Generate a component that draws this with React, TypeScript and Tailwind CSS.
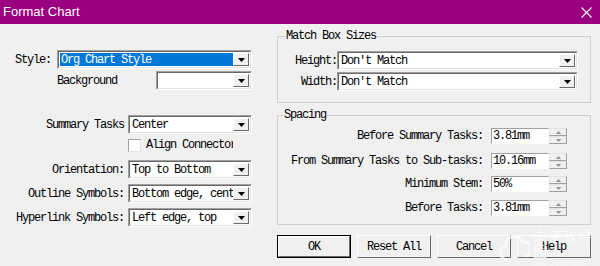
import React from "react"

function DropBtn() {
    return (
        <div className="w-[16px] h-full shrink-0 flex items-center justify-center bg-[#f0f0f0] border border-white border-b-[#696969] border-r-[#696969]">
            <svg width="7" height="4" viewBox="0 0 7 4">
                <path d="M0 0h7L3.5 4z" fill="#000" />
            </svg>
        </div>
    )
}

function Combo({ value, w, selected }: { value: string; w: string; selected?: boolean }) {
    return (
        <div className={`${w} h-[19px] flex border border-[#a0a0a0] border-b-white border-r-white`}>
            <div className="flex-1 min-w-0 flex border border-[#696969] border-b-[#e3e3e3] border-r-[#e3e3e3] bg-white p-[1px]">
                <div className={`flex-1 min-w-0 flex items-center px-[1px] overflow-hidden whitespace-nowrap ${selected ? "bg-[#0078d7] text-white" : ""}`}>
                    {value}
                </div>
                <DropBtn />
            </div>
        </div>
    )
}

function Spin({ value }: { value: string }) {
    return (
        <div className="flex h-[16px] ml-[8px]">
            <div className="w-[58px] flex items-center bg-white border border-[#a0a0a0] border-b-white border-r-white pl-[1px] whitespace-nowrap">
                {value}
            </div>
            <div className="w-[18px] flex flex-col">
                <div className="flex-1 flex items-center justify-center bg-[#f0f0f0] border border-[#e3e3e3] border-b-[#a0a0a0] border-r-[#a0a0a0]">
                    <svg width="5" height="3" viewBox="0 0 5 3"><path d="M0 3h5L2.5 0z" fill="#909090" /></svg>
                </div>
                <div className="flex-1 flex items-center justify-center bg-[#f0f0f0] border border-[#e3e3e3] border-b-[#a0a0a0] border-r-[#a0a0a0]">
                    <svg width="5" height="3" viewBox="0 0 5 3"><path d="M0 0h5L2.5 3z" fill="#909090" /></svg>
                </div>
            </div>
        </div>
    )
}

function Btn({ label, def }: { label: string; def?: boolean }) {
    return (
        <div className={`w-[74px] h-[23px] flex ${def ? "border border-[#000]" : ""}`}>
            <div className="flex-1 flex items-center justify-center bg-[#f0f0f0] border border-white border-b-[#696969] border-r-[#696969]">
                {label}
            </div>
        </div>
    )
}

export default function App() {
    const rows = [
        { label: "Orientation:", value: "Top to Bottom" },
        { label: "Outline Symbols:", value: "Bottom edge, center" },
        { label: "Hyperlink Symbols:", value: "Left edge, top" },
    ]
    const spins = [
        { label: "Before Summary Tasks:", value: "3.81mm", mt: "mt-[7px]" },
        { label: "From Summary Tasks to Sub-tasks:", value: "10.16mm", mt: "mt-[9px]" },
        { label: "Minimum Stem:", value: "50%", mt: "mt-[7px]" },
        { label: "Before Tasks:", value: "3.81mm", mt: "mt-[8px]" },
    ]

    return (
        <div className="w-[600px] h-[266px] bg-[#f0f0f0] flex flex-col relative overflow-hidden font-['Liberation_Mono',monospace] text-[12px] tracking-[-1.2px] text-black">
            <div className="h-[24px] shrink-0 bg-[#9b0080] flex items-center justify-between pl-[3px] pr-[8px] font-['Liberation_Sans',sans-serif] text-[13px] tracking-normal text-white">
                <span>Format Chart</span>
                <svg width="11" height="11" viewBox="0 0 11 11">
                    <path d="M0.5 0.5l10 10M10.5 0.5l-10 10" stroke="#fff" strokeWidth="1.1" />
                </svg>
            </div>

            <div className="flex flex-1">
                {/* left column */}
                <div className="w-[277px] shrink-0 pt-[26px]">
                    <div className="flex items-center">
                        <span className="w-[57px] pl-[15px]">Style:</span>
                        <Combo value="Org Chart Style" w="w-[195px]" selected />
                    </div>
                    <div className="flex items-center mt-[2px]">
                        <span className="w-[156px] pl-[57px]">Background</span>
                        <Combo value="" w="w-[96px]" />
                    </div>

                    <div className="flex items-center mt-[25px]">
                        <span className="w-[128px] text-right pr-[4px]">Summary Tasks</span>
                        <Combo value="Center" w="w-[124px]" />
                    </div>
                    <div className="flex items-center h-[16px] mt-[3px] pl-[128px]">
                        <div className="w-[13px] h-[13px] bg-white border border-[#a0a0a0] border-b-[#e3e3e3] border-r-[#e3e3e3]" />
                        <span className="ml-[5px] w-[87px] overflow-hidden whitespace-nowrap">Align Connectors</span>
                    </div>
                    <div className="flex flex-col gap-[5px] mt-[7px]">
                        {rows.map((r) => (
                            <div key={r.label} className="flex items-center">
                                <span className="w-[128px] text-right pr-[4px] whitespace-nowrap">{r.label}</span>
                                <Combo value={r.value} w="w-[124px]" />
                            </div>
                        ))}
                    </div>
                </div>

                {/* right column */}
                <div className="w-[314px] shrink-0 flex flex-col">
                    <fieldset className="mt-[6px] border border-[#d0d0d0] h-[73px] pl-[2px]">
                        <legend className="ml-[5px] px-[1px] leading-[12px]">Match Box Sizes</legend>
                        <div className="flex items-center mt-[9px]">
                            <span className="w-[57px] text-right">Height:</span>
                            <Combo value="Don't Match" w="w-[241px]" />
                        </div>
                        <div className="flex items-center mt-[2px]">
                            <span className="w-[57px] text-right">Width:</span>
                            <Combo value="Don't Match" w="w-[241px]" />
                        </div>
                    </fieldset>

                    <fieldset className="mt-[6px] border border-[#d0d0d0] h-[116px] pr-[23px]">
                        <legend className="ml-[5px] px-[1px] leading-[12px]">Spacing</legend>
                        {spins.map((s) => (
                            <div key={s.label} className={`flex items-center justify-end h-[16px] leading-[16px] ${s.mt}`}>
                                <span className="whitespace-nowrap">{s.label}</span>
                                <Spin value={s.value} />
                            </div>
                        ))}
                    </fieldset>

                    <div className="flex gap-[6px] mt-[10px]">
                        <Btn label="OK" def />
                        <Btn label="Reset All" />
                        <Btn label="Cancel" />
                        <Btn label="Help" />
                    </div>
                </div>
            </div>

            {/* watermark */}
            <div className="absolute left-[498px] top-[228px] flex items-center gap-[2px] opacity-70 pointer-events-none tracking-normal">
                <svg width="36" height="34" viewBox="0 0 36 34">
                    <path d="M10 30a8 8 0 0 1-2-15.5A10 10 0 0 1 27 10a8 8 0 0 1 3 16" fill="none" stroke="#fff" strokeWidth="3" />
                </svg>
                <div className="flex flex-col leading-none text-white">
                    <span className="font-['Noto_Sans_CJK_SC',sans-serif] text-[15px]">未来软件园</span>
                    <span className="font-['Liberation_Sans',sans-serif] text-[7px] mt-[2px]">www.orsoon.com</span>
                </div>
            </div>
        </div>
    )
}
